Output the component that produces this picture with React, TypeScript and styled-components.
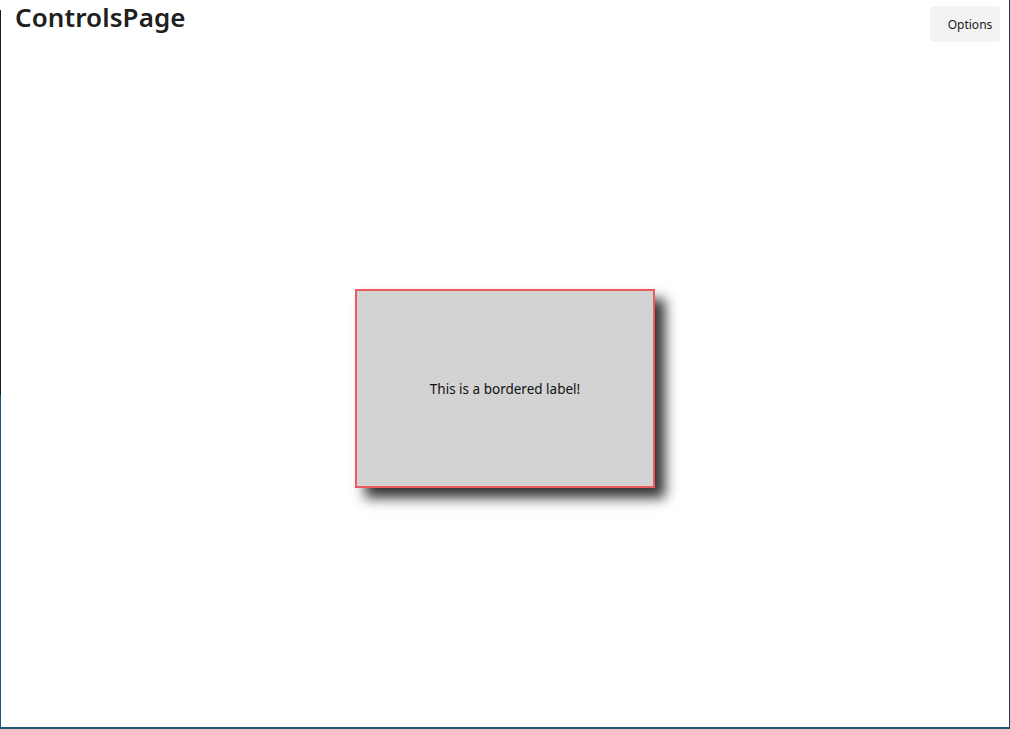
import React from "react";
import styled, { createGlobalStyle } from "styled-components";

const Global = createGlobalStyle`
  html, body { margin: 0; padding: 0; background: #ffffff; }
  body { font-family: "Noto Sans", "Open Sans", "Liberation Sans", sans-serif; }
  * { box-sizing: border-box; }
`;

const Frame = styled.div`
  position: relative;
  height: 729px;
  width: 1010px;
  display: flex;
  flex-direction: column;
  background: #ffffff;
  border-left: 1px solid #1a5a75;
  border-right: 1px solid #1b3a5c;
  border-bottom: 2px solid #1a5a75;
  &::before {
    content: "";
    position: absolute;
    left: -1px;
    top: 10px;
    width: 1px;
    height: 385px;
    background: #1e1e1e;
  }
  &::after {
    content: "";
    position: absolute;
    left: -1px;
    top: 0;
    width: 1px;
    height: 10px;
    background: #ffffff;
  }
`;

const Header = styled.header`
  display: flex;
  justify-content: space-between;
  align-items: flex-start;
  padding: 0 9px 0 14px;
`;

const Title = styled.h1`
  margin: 0;
  font-size: 26px;
  line-height: 34px;
  font-weight: 600;
  color: #202020;
  letter-spacing: 0.1px;
`;

const OptionsButton = styled.button`
  margin-top: 6px;
  width: 70px;
  height: 36px;
  border: none;
  border-radius: 4px;
  background: #f3f3f3;
  color: #1b1b1b;
  font-family: inherit;
  font-size: 12px;
  padding: 0 0 0 10px;
  text-align: center;
  cursor: pointer;
`;

const Body = styled.main`
  flex: 1;
  display: flex;
  align-items: center;
  justify-content: center;
  padding: 8px 0 0 0;
`;

const BorderedLabel = styled.div`
  width: 300px;
  height: 199px;
  display: flex;
  align-items: center;
  justify-content: center;
  background: #d3d3d3;
  border: 2px solid #ee5a5e;
  box-shadow: 10px 10px 12px rgba(0, 0, 0, 0.8);
  font-size: 13.5px;
  color: #111111;
`;

export default function App() {
  return (
    <>
      <Global />
      <Frame>
        <Header>
          <Title>ControlsPage</Title>
          <OptionsButton>Options</OptionsButton>
        </Header>
        <Body>
          <BorderedLabel>This is a bordered label!</BorderedLabel>
        </Body>
      </Frame>
    </>
  );
}
